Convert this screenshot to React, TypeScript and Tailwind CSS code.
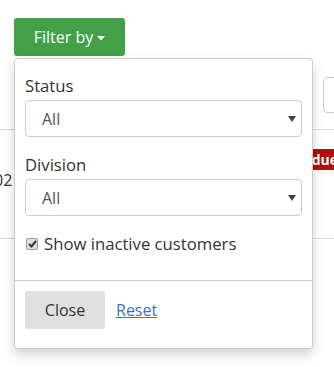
import React from "react";

function Caret() {
  return (
    <svg width="8" height="5" viewBox="0 0 8 5" className="ml-[4px] mt-[3px]">
      <path d="M0 0 L8 0 L4 4.5 Z" fill="#fff" />
    </svg>
  );
}

function SelectBox() {
  return (
    <div className="relative flex h-[37px] w-full items-center rounded-[4px] border border-[#ccc] bg-white pl-[16px] text-[16px] text-[#555]">
      <span>All</span>
      <svg width="8" height="6" viewBox="0 0 8 6" className="absolute right-[5px] top-[15px]">
        <path d="M0 0 L8 0 L4 6 Z" fill="#444" />
      </svg>
    </div>
  );
}

export default function App() {
  return (
    <div
      className="relative h-[367px] w-[334px] overflow-hidden bg-white text-[#333]"
      style={{ fontFamily: '"Open Sans", "Liberation Sans", sans-serif' }}
    >
      {/* background page */}
      <div className="pl-[14px] pt-[18px]">
        <button className="flex h-[38px] w-[111px] items-center justify-center rounded-[3px] bg-[#43a047] text-[16px] text-white">
          Filter by
          <Caret />
        </button>
      </div>
      <div className="mt-[21px] flex justify-end">
        <div className="h-[36px] w-[40px] translate-x-[29px] rounded-[4px] border border-[#ccc]" />
      </div>
      <div className="mt-[16px] border-t border-[#ddd]" />
      <div className="flex h-[108px] items-start justify-between">
        <span className="ml-[-6px] mt-[38px] text-[16px] text-[#333]">02</span>
        <span className="mt-[19px] mr-[-10px] flex h-[21px] items-center bg-[#b30e10] pl-[3px] pr-[6px] text-[14px] font-bold text-white">
          due
        </span>
      </div>
      <div className="border-t border-[#ddd]" />

      {/* dropdown panel */}
      <div className="absolute left-[14px] top-[58px] w-[299px] rounded-[4px] border border-[#ccc] bg-white shadow-[0_6px_12px_rgba(0,0,0,0.175)]">
        <div className="px-[10px] pt-[16px] pb-[25px]">
          <div className="mb-[3px] text-[16.7px] leading-[22px] text-[#333]">Status</div>
          <SelectBox />
          <div className="mb-[3px] mt-[17px] text-[16.7px] leading-[22px] text-[#333]">Division</div>
          <SelectBox />
          <label className="mt-[17px] flex items-center text-[16.7px] leading-[22px] text-[#333]">
            <span className="ml-[1px] mr-[6px] flex h-[12px] w-[12px] items-center justify-center rounded-[2px] border border-[#999] bg-[#ddd]">
              <svg width="9" height="8" viewBox="0 0 9 8">
                <path d="M1 4 L3.5 6.5 L8 1" fill="none" stroke="#333" strokeWidth="2" />
              </svg>
            </span>
            Show inactive customers
          </label>
        </div>
        <div className="border-t border-[#ccc] px-[10px] pt-[10px] pb-[19px]">
          <div className="flex items-center">
            <button className="h-[38px] w-[80px] rounded-[3px] bg-[#e0e0e0] text-[16px] text-[#333]">
              Close
            </button>
            <a className="ml-[11px] text-[16px] text-[#337ab7] underline">Reset</a>
          </div>
        </div>
      </div>
    </div>
  );
}
